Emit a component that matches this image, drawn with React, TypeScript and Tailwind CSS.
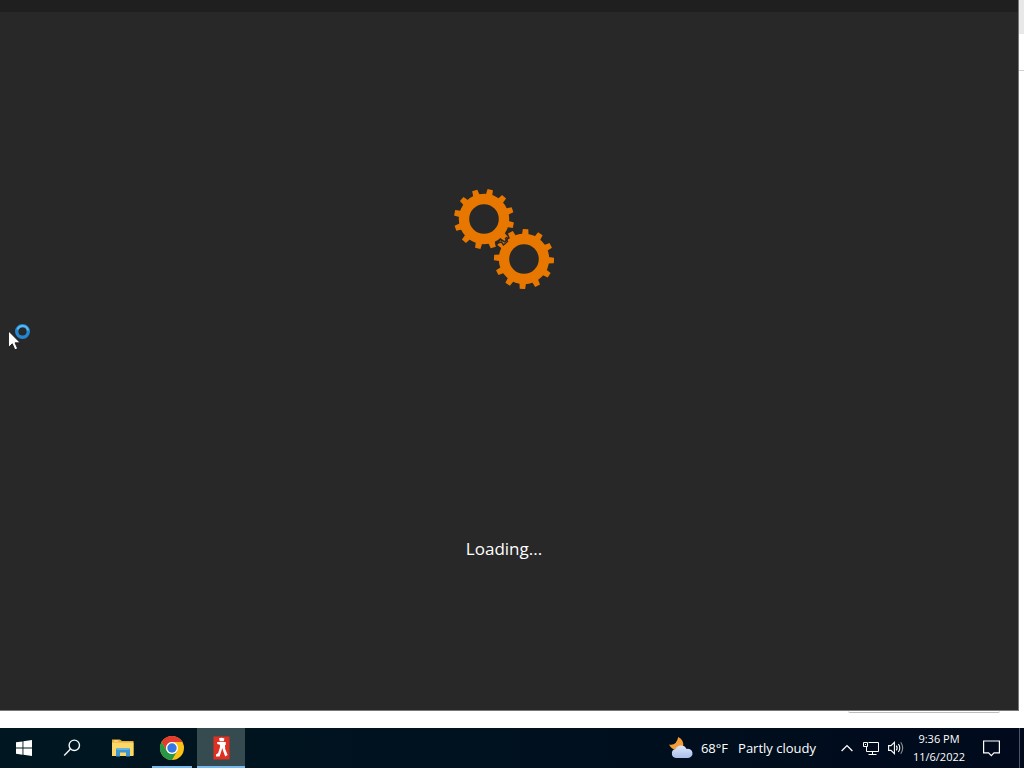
import type { ReactNode } from "react";

function Gear({ cx, cy, phase }: { cx: number; cy: number; phase: number }) {
  const teeth = Array.from({ length: 12 }, (_, i) => phase + i * 30);
  return (
    <g transform={`translate(${cx} ${cy})`} fill="#e87700">
      {teeth.map((a) => (
        <path key={a} d="M23 -3.4L30 -2.7V2.7L23 3.4Z" transform={`rotate(${a})`} />
      ))}
      <circle r="20" fill="none" stroke="#e87700" strokeWidth="10.4" />
    </g>
  );
}

function Gears() {
  return (
    <svg width="100" height="100" viewBox="0 0 100 100" aria-hidden="true">
      <Gear cx={30} cy={30} phase={12} />
      <Gear cx={70} cy={70} phase={3} />
      <path d="M41.5 55.5L43.5 54L47.5 53L49.5 56L53.5 52.5L51.5 49.5L53.5 48" fill="none" stroke="#282828" strokeWidth="1.4" />
    </svg>
  );
}

function BusyPointer() {
  return (
    <svg className="absolute left-2 top-[322px]" width="24" height="30" viewBox="0 0 24 30" aria-hidden="true">
      <circle cx="14.5" cy="9.5" r="5.8" fill="none" stroke="#2386d0" strokeWidth="3.4" />
      <path d="M9.5 7.5A5.5 5.5 0 0 1 20 8.5" fill="none" stroke="#55b8ee" strokeWidth="2" />
      <path d="M.5 9V25.3L4.3 21.8L6.9 27.8L9.6 26.6L7 20.8H12.2Z" fill="#fff" stroke="#111" strokeWidth=".8" />
    </svg>
  );
}

function StartIcon() {
  return (
    <svg width="16" height="16" viewBox="0 0 16 16" fill="#fff">
      <path d="M0 2.3L6.5 1.4V7.5H0ZM7.4 1.2L16 0V7.5H7.4ZM0 8.5H6.5V14.7L0 13.8ZM7.4 8.5H16V16L7.4 14.8Z" />
    </svg>
  );
}

function SearchIcon() {
  return (
    <svg width="18" height="18" viewBox="0 0 18 18" fill="none" stroke="#f4f8fa" strokeWidth="1.4">
      <circle cx="11.3" cy="6.3" r="5.2" />
      <path d="M7.5 10L1.2 16.4" />
    </svg>
  );
}

function ExplorerIcon() {
  return (
    <svg width="22" height="20" viewBox="0 0 22 20">
      <path d="M0 1.5H8L10 3H21.5V17H0Z" fill="#e9ad36" />
      <path d="M0 4.5H21.5V18H0Z" fill="#fbd669" />
      <path d="M2 2.5H6.5V3.5H2Z" fill="#fff0b0" />
      <path d="M4 11.5Q4 10 5.5 10H16.5Q18 10 18 11.5V18.5H14V14.5H8V18.5H4Z" fill="#3d96cf" />
      <path d="M5 10H17V12H5Z" fill="#65b3df" />
    </svg>
  );
}

function ChromeIcon() {
  return (
    <svg width="24" height="24" viewBox="0 0 24 24">
      <circle cx="12" cy="12" r="12" fill="#fbc116" />
      <path d="M1.6 6A12 12 0 0 1 22.4 6H12A6 6 0 0 0 6.8 15Z" fill="#e33b2e" />
      <path d="M1.6 6A12 12 0 0 0 12 24L17.2 15A6 6 0 0 1 6.8 15Z" fill="#279847" />
      <circle cx="12" cy="12" r="6" fill="#fff" />
      <circle cx="12" cy="12" r="4.7" fill="#3478e5" />
    </svg>
  );
}

function RunnerIcon() {
  return (
    <svg width="17" height="24" viewBox="0 0 17 24">
      <rect width="16" height="23" x=".5" y=".5" fill="#df3022" />
      <path d="M6 2.2Q9 1 11.4 2.6L10.8 5.2H6.8Z" fill="#fff" />
      <path d="M4.2 6H12.8V8.4L12 9.6L12.2 13L14.6 19L12.2 20.6L10 14.5L9.2 12L8.4 15L6.6 20.5H3V18.6L5.2 17L7 11V8.8L4.2 8Z" fill="#fff" />
    </svg>
  );
}

function WeatherIcon() {
  return (
    <svg width="26" height="22" viewBox="0 0 26 22">
      <defs>
        <linearGradient id="cloud" x1="0" y1="0" x2="0" y2="1">
          <stop offset="0" stopColor="#dce7fa" />
          <stop offset="1" stopColor="#a9bfe9" />
        </linearGradient>
      </defs>
      <path d="M9.2 0Q15.5 3.2 14 10L8 13Q2.5 12.5 0 7.5Q7.5 9 9.2 0Z" fill="#f29d38" />
      <path d="M7 21A4.5 4.5 0 0 1 6.5 12.1A6.2 6.2 0 0 1 17.6 12A4.6 4.6 0 1 1 19 21Z" fill="url(#cloud)" />
    </svg>
  );
}

function ChevronIcon() {
  return (
    <svg width="12" height="8" viewBox="0 0 12 8" fill="none" stroke="#fff" strokeWidth="1.3">
      <path d="M.6 7L6 1.6L11.4 7" />
    </svg>
  );
}

function NetworkIcon() {
  return (
    <svg width="17" height="15" viewBox="0 0 17 15" fill="none" stroke="#fff">
      <path d="M5.5 1.5H15.5V10.5H3.5V6M9.5 10.5V13.5M5.5 13.5H13.5" />
      <path d="M.5 1.5H4.5V5.5H.5ZM2.5 3V4" />
    </svg>
  );
}

function VolumeIcon() {
  return (
    <svg width="16" height="14" viewBox="0 0 16 14" fill="none" stroke="#fff" strokeWidth="1.1">
      <path d="M.6 4.6H3L6.4 1.3V12.7L3 9.4H.6Z" />
      <path d="M8.3 4.7Q10 7 8.3 9.3M10.4 3Q13.2 7 10.4 11" />
      <path d="M12.7 1.3Q16.7 7 12.7 12.7" stroke="#8b939c" />
    </svg>
  );
}

function NotificationIcon() {
  return (
    <svg width="17" height="17" viewBox="0 0 17 17" fill="none" stroke="#fff" strokeWidth="1.2">
      <path d="M.6 1H16.4V12.8H11L8.3 15.6L5.6 12.8H.6Z" />
    </svg>
  );
}

function TaskButton({ label, className = "", children }: { label: string; className?: string; children: ReactNode }) {
  return (
    <button type="button" aria-label={label} className={`flex h-10 items-center justify-center ${className}`}>
      {children}
    </button>
  );
}

function Taskbar() {
  return (
    <footer className="flex h-10 shrink-0 items-center bg-linear-to-r from-[#001721] to-[#000a1c] text-white">
      <nav className="flex items-center" aria-label="Taskbar">
        <TaskButton label="Start" className="w-12"><StartIcon /></TaskButton>
        <TaskButton label="Search" className="w-12"><SearchIcon /></TaskButton>
        <TaskButton label="File Explorer" className="w-14 pr-0.5"><ExplorerIcon /></TaskButton>
        <TaskButton label="Google Chrome" className="w-10 border-b-2 border-[#76b9ed] pt-0.5"><ChromeIcon /></TaskButton>
        <TaskButton label="Installer" className="ml-[5px] w-12 border-b-2 border-[#76b9ed] bg-[#354b50] pt-0.5"><RunnerIcon /></TaskButton>
      </nav>
      <div className="ml-auto flex h-10 items-center">
        <button type="button" className="mr-6 flex items-center gap-1.5 pr-px text-[13px] leading-4 whitespace-nowrap">
          <WeatherIcon />
          <span className="flex gap-2.5"><span>68°F</span><span>Partly cloudy</span></span>
        </button>
        <div className="flex items-center gap-2">
          <button type="button" aria-label="Show hidden icons" className="pr-0.5"><ChevronIcon /></button>
          <button type="button" aria-label="Network"><NetworkIcon /></button>
          <button type="button" aria-label="Volume"><VolumeIcon /></button>
        </div>
        <time dateTime="2022-11-06T21:36" className="ml-1.5 flex w-[58px] flex-col items-center text-[11px] leading-[18px] whitespace-nowrap">
          <span>9:36 PM</span>
          <span>11/6/2022</span>
        </time>
        <TaskButton label="Notifications" className="w-[46px]"><NotificationIcon /></TaskButton>
        <button type="button" aria-label="Show desktop" className="ml-[5px] h-10 w-[5px] border-l border-[#4c5965]" />
      </div>
    </footer>
  );
}

export default function App() {
  return (
    <div className="relative flex h-screen flex-col overflow-hidden bg-white font-['Open_Sans','Noto_Sans',sans-serif]">
      <div className="flex min-h-0 flex-1 flex-col">
        <div className="flex min-h-0 flex-1">
          <main className="flex min-w-0 flex-1 flex-col border-r border-b border-[#777] bg-[#282828]">
            <div className="h-3 shrink-0 bg-[#1f1f1f]" />
            <div className="flex flex-1 flex-col items-center pt-[177px] pr-[10px]">
              <Gears />
              <p role="status" className="mt-[248px] text-[17px] leading-6 text-white">Loading...</p>
            </div>
          </main>
          <div className="w-[5px] shrink-0">
            <div className="h-[34px] bg-[#e8e8e8]" />
            <div className="h-[37px] border-b border-[#cfcfcf]" />
          </div>
        </div>
        <div className="flex h-[17px] shrink-0 justify-end pr-6">
          <div className="h-0.5 w-[152px] rounded-b border-b border-[#bdbdbd] shadow-md" />
        </div>
      </div>
      <Taskbar />
      <BusyPointer />
    </div>
  );
}
